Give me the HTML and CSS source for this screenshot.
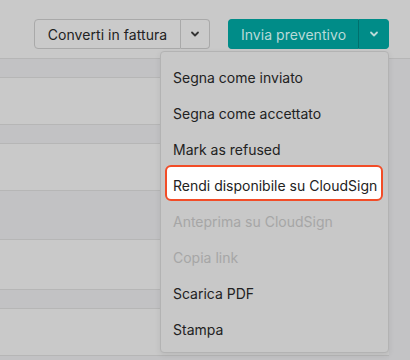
FILE: index.html
```html
<!DOCTYPE html>
<html lang="it">
<head>
    <meta charset="UTF-8">
    <title>Preventivo</title>
    <link rel="stylesheet" href="styles.css">
</head>
<body>
    <div class="toolbar">
        <div class="split">
            <button class="split-main">Converti in fattura</button>
            <button class="split-caret">
                <svg width="10" height="6" viewBox="0 0 10 6"><path d="M2 1.5 L5 4.5 L8 1.5" fill="none" stroke="currentColor" stroke-width="1.8" stroke-linecap="round" stroke-linejoin="round"/></svg>
            </button>
        </div>
        <div class="split primary">
            <button class="split-main">Invia preventivo</button>
            <button class="split-caret">
                <svg width="10" height="6" viewBox="0 0 10 6"><path d="M2 1.5 L5 4.5 L8 1.5" fill="none" stroke="currentColor" stroke-width="1.8" stroke-linecap="round" stroke-linejoin="round"/></svg>
            </button>

            <ul class="menu">
                <li>Segna come inviato</li>
                <li>Segna come accettato</li>
                <li>Mark as refused</li>
                <li class="focus">Rendi disponibile su CloudSign</li>
                <li class="disabled">Anteprima su CloudSign</li>
                <li class="disabled">Copia link</li>
                <li>Scarica PDF</li>
                <li>Stampa</li>
            </ul>
        </div>
    </div>

    <div class="content">
        <div class="rows">
            <div class="row band"></div>
            <div class="row"></div>
            <div class="row band"></div>
            <div class="row"></div>
            <div class="row band tall"></div>
            <div class="row wide"></div>
            <div class="row band"></div>
            <div class="row"></div>
            <div class="row band"></div>
        </div>
        <div class="gutter"></div>
    </div>
</body>
</html>
```

FILE: styles.css
```css
body {
    margin: 0;
    background-color: #c9c9c9;
    font-family: Inter, 'Liberation Sans', sans-serif;
    color: #222;
    overflow: hidden;
}
.toolbar {
    height: 58px;
    box-sizing: border-box;
    padding: 19px 21px 0 0;
    display: flex;
    justify-content: flex-end;
    gap: 18px;
}
.split {
    position: relative;
    display: flex;
    height: 30px;
}
.split button {
    font-family: inherit;
    font-size: 14px;
    letter-spacing: 0.05px;
    color: #222;
    background-color: #cacaca;
    border: 1px solid #a9a9a9;
    margin: 0;
    padding: 0;
    display: flex;
    align-items: center;
    justify-content: center;
    cursor: pointer;
}
.split-main {
    width: 147px;
    border-radius: 4px 0 0 4px;
}
.split-caret {
    width: 29px;
    border-left: none !important;
    border-radius: 0 4px 4px 0;
    color: #333 !important;
}
.primary .split-main,
.primary .split-caret {
    background-color: #008c88;
    border-color: #008c88;
    color: #b9dad8 !important;
}
.primary .split-main {
    width: 131px;
    border-right: 1px solid #00706d;
}
.primary .split-caret {
    width: 30px;
}
.menu {
    position: absolute;
    top: 32px;
    right: 0;
    width: 229px;
    margin: 0;
    padding: 8px 0 4px;
    list-style: none;
    background-color: #c8c8c8;
    border: 1px solid #b3b3b3;
    border-radius: 4px;
    box-shadow: 0 2px 6px rgba(0, 0, 0, 0.08);
    box-sizing: border-box;
    z-index: 2;
}
.menu li {
    position: relative;
    height: 36px;
    line-height: 36px;
    padding-left: 12px;
    font-size: 14px;
    color: #222;
    z-index: 0;
}
.menu li.disabled {
    color: #a6a6a6;
}
.menu li.focus::before {
    content: "";
    position: absolute;
    top: -3px;
    bottom: 3px;
    left: 4px;
    right: 5px;
    background-color: #fff;
    border: 2px solid #f24c27;
    border-radius: 6px;
    z-index: -1;
}
.content {
    display: flex;
}
.rows {
    flex: 1;
}
.row {
    height: 46px;
    border-top: 1px solid #b6b6b6;
}
.row.band {
    height: 18px;
    background-color: #c2c2c4;
}
.row.tall {
    height: 48px;
}
.row.wide {
    height: 49px;
}
.gutter {
    width: 21px;
    background-color: #c3c3c5;
    border-top: 1px solid #b6b6b6;
}
```
